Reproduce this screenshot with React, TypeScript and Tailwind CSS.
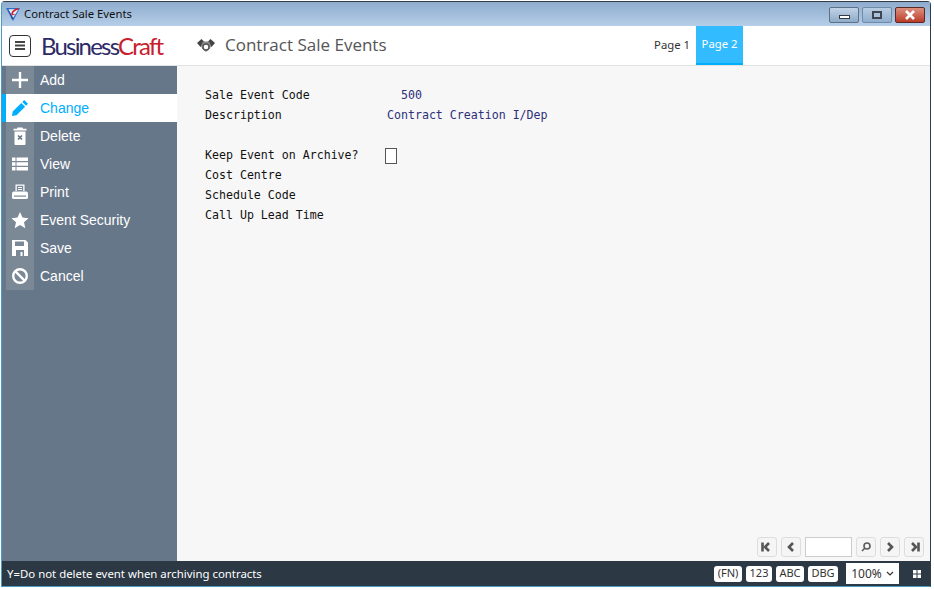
import { Fragment } from "react";

const navItems = [
  { label: "Add", icon: "add" },
  { label: "Change", icon: "change", active: true },
  { label: "Delete", icon: "delete" },
  { label: "View", icon: "view" },
  { label: "Print", icon: "print" },
  { label: "Event Security", icon: "star" },
  { label: "Save", icon: "save" },
  { label: "Cancel", icon: "cancel" },
];

function NavIcon({ name }: { name: string }) {
  const common = { width: 18, height: 18, viewBox: "0 0 18 18", fill: "currentColor" };
  switch (name) {
    case "add":
      return (
        <svg {...common}>
          <path d="M7.800 1h2.400v6.800H17v2.400h-6.800V17H7.800v-6.800H1V7.800h6.800z" />
        </svg>
      );
    case "change":
      return (
        <svg {...common}>
          <path d="M13.200 1l3.800 3.800-1.900 1.900-3.800-3.800zM10.300 3.900l3.800 3.800L5.500 16.300 1 17l.7-4.500z" />
        </svg>
      );
    case "delete":
      return (
        <svg {...common}>
          <path d="M6.500 0.500h5l.5 1.300h3.500v1.700h-13V1.800H6zM3.500 4.500h11V17a1 1 0 0 1-1 1h-9a1 1 0 0 1-1-1z" />
          <path d="M7 8.500l4 4M11 8.500l-4 4" stroke="#67778a" strokeWidth="1.700" />
        </svg>
      );
    case "view":
      return (
        <svg {...common}>
          <path d="M1 2.500h3.500v3.600H1zM5.500 2.500H17v3.600H5.500zM1 7.200h3.500v3.600H1zM5.500 7.200H17v3.600H5.500zM1 11.900h3.500v3.600H1zM5.500 11.900H17v3.600H5.500z" />
        </svg>
      );
    case "print":
      return (
        <svg {...common}>
          <path d="M4.500 1.500h9v6.500h-1.300V2.800H5.800V8H4.500z" />
          <path d="M7 4h4v1H7zM7 6h4v1H7z" />
          <path d="M3 8.500h12a2 2 0 0 1 2 2v4a1.500 1.500 0 0 1-1.500 1.500h-13A1.500 1.500 0 0 1 1 14.500v-4a2 2 0 0 1 2-2z" />
          <path d="M3 12.500h12v1.200H3z" fill="#7b8896" />
        </svg>
      );
    case "star":
      return (
        <svg {...common}>
          <path d="M9 1l2.500 5.600 6 .6-4.500 4 1.300 6L9 14.100 3.700 17.200l1.300-6-4.500-4 6-.6z" />
        </svg>
      );
    case "save":
      return (
        <svg {...common}>
          <path fillRule="evenodd" d="M1 1h13.500L17 3.500V17H1zM4 2.500V7h9V2.500zM5 11v6h8v-6z" />
          <path d="M9.500 13h2v4h-2z" />
        </svg>
      );
    default:
      return (
        <svg {...common} fill="none" stroke="currentColor" strokeWidth="2.400">
          <circle cx="9" cy="9" r="6.800" />
          <path d="M4.200 4.200l9.600 9.600" />
        </svg>
      );
  }
}

function Chevron({ dir, bar }: { dir: "left" | "right"; bar?: boolean }) {
  return (
    <svg width="12" height="12" viewBox="0 0 12 12" fill="none" stroke="#555555" strokeWidth="2.600">
      {dir === "left" ? <path d="M8 2L4 6l4 4" /> : <path d="M4 2l4 4-4 4" />}
      {bar && (dir === "left" ? <path d="M1.500 1.500v9" /> : <path d="M10.500 1.500v9" />)}
    </svg>
  );
}

function PagerButton({ children }: { children: React.ReactNode }) {
  return (
    <div className="flex h-[20px] w-[20px] items-center justify-center rounded-[3px] border border-[#dddddd] bg-[#f5f5f5]">
      {children}
    </div>
  );
}

function Badge({ label, width }: { label: string; width: string }) {
  return (
    <div className={`flex h-[16px] items-center justify-center rounded-[3px] bg-white text-[11px] text-[#333333] ${width}`}>
      {label}
    </div>
  );
}

const fields = [
  { label: "Sale Event Code", value: "500", indent: "pl-[14px]" },
  { label: "Description", value: "Contract Creation I/Dep", indent: "" },
  { spacer: true },
  { label: "Keep Event on Archive?", checkbox: true },
  { label: "Cost Centre" },
  { label: "Schedule Code" },
  { label: "Call Up Lead Time" },
];

export default function App() {
  return (
    <div className="h-[589px] w-[934px] overflow-hidden bg-white pt-[1px] pr-[3px] pb-[2px] pl-[1px] font-['Liberation_Sans',sans-serif]">
      <div className="flex h-full flex-col rounded-t-[4px] border border-[#4a9cc0] border-t-[#333b44] border-r-[#2f3d48] bg-[#b4cce6]">
        {/* Title bar */}
        <div className="flex h-[24px] shrink-0 items-center bg-gradient-to-b from-[#8eacce] to-[#b6cee8] pl-[3px] pr-[5px] font-['Noto_Sans',sans-serif]">
          <svg width="16" height="16" viewBox="0 0 16 16">
            <path d="M1 2h14L8 15z" fill="#2a6fc8" />
            <path d="M3.500 3.200h10L8 12z" fill="#e8f0fa" />
            <path d="M3 3l5 9-1 1.500z" fill="#1f3f9f" />
            <path d="M13 2C8.500 3 5.500 6 6.500 9.500L11 8.500 8 8C8 6 10 4.500 14 3.500z" fill="#d2232a" />
          </svg>
          <span className="ml-[3px] text-[11.300px] text-[#111111]">Contract Sale Events</span>
          <div className="ml-auto flex items-center gap-[3px] self-start pt-[5px]">
            <div className="flex h-[16px] w-[30px] items-end justify-center rounded-[2px] border border-[#5f6f85] bg-gradient-to-b from-[#c2d3e6] to-[#8fabc9] pb-[3px]">
              <div className="h-[4px] w-[11px] border border-[#333a44] bg-white" />
            </div>
            <div className="flex h-[16px] w-[30px] items-center justify-center rounded-[2px] border border-[#6f8ba8] bg-gradient-to-b from-[#b8cde3] to-[#90aecd]">
              <div className="h-[8px] w-[10px] border-2 border-[#3f4650] bg-[#a9c1da]" />
            </div>
            <div className="flex h-[16px] w-[30px] items-center justify-center rounded-[2px] border border-[#5a2a26] bg-gradient-to-b from-[#dc8f7e] to-[#b93a26]">
              <svg width="12" height="10" viewBox="0 0 12 10">
                <path d="M2 1l8 8M10 1L2 9" stroke="#ffffff" strokeWidth="2.600" />
              </svg>
            </div>
          </div>
        </div>

        {/* Header */}
        <div className="flex h-[40px] shrink-0 items-center border-b border-[#e2e2e2] bg-white">
          <button className="ml-[7px] flex h-[22px] w-[22px] items-center justify-center rounded-[4px] border border-[#333333]">
            <svg width="10" height="9" viewBox="0 0 10 9" fill="#444444">
              <path d="M0 0h10v2H0zM0 3.500h10v2H0zM0 7h10v2H0z" />
            </svg>
          </button>
          <div className="ml-[10px] w-[156px] font-['Lato',sans-serif] text-[24px] leading-none tracking-[-1.800px]">
            <span className="text-[#2c2a66]">Business</span>
            <span className="text-[#c8202f]">Craft</span>
          </div>
          <svg width="18" height="16" viewBox="0 0 18 16">
            <path d="M0 5l4.500-4L8 4.500 3.500 9zM18 5l-4.500-4L10 4.500 14.500 9z" fill="#444444" />
            <path d="M6 3.500h6l2 4-1 3-4 3.500-4-3.500-1-3z" fill="#8a8a8a" />
            <circle cx="9" cy="9" r="3" fill="#ffffff" stroke="#555555" strokeWidth="1.400" />
          </svg>
          <span className="mb-[2px] ml-[10px] font-['Open_Sans',sans-serif] text-[17px] text-[#555555]">Contract Sale Events</span>
          <div className="ml-auto mr-[187px] flex h-full items-stretch font-['Noto_Sans',sans-serif] text-[11.300px]">
            <div className="flex items-center px-[5px] pr-[6px] text-[#333333]">Page 1</div>
            <div className="flex w-[47px] items-center justify-center border-b-2 border-[#00aeff] bg-[#33bbff] text-white">
              Page 2
            </div>
          </div>
        </div>

        <div className="flex min-h-0 flex-1">
          {/* Sidebar */}
          <div className="w-[175px] shrink-0 bg-[#67778a]">
            {navItems.map((item) => (
              <div key={item.label} className={`flex h-[28px] items-stretch ${item.active ? "bg-white" : ""}`}>
                <div
                  className={`flex w-[32px] items-center justify-center border-l-4 ${
                    item.active ? "border-[#00aeff] text-[#00aeff]" : "border-[#67778a] bg-[#7b8896] text-white"
                  }`}
                >
                  <NavIcon name={item.icon} />
                </div>
                <div className={`ml-[6px] flex items-center text-[14px] ${item.active ? "text-[#00aeff]" : "text-white"}`}>
                  {item.label}
                </div>
              </div>
            ))}
          </div>

          {/* Form */}
          <div className="flex min-w-0 flex-1 flex-col bg-[#f7f7f7]">
            <div className="flex-1 pt-[20px] pl-[28px] font-['DejaVu_Sans_Mono',monospace] text-[11.600px]">
              {fields.map((f, i) => (
                <Fragment key={i}>
                  {f.spacer ? (
                    <div className="h-[20px]" />
                  ) : (
                    <div className="flex h-[20px] items-center">
                      <span className="w-[182px] whitespace-pre text-[#111111]">{f.label}</span>
                      {f.value && <span className={`whitespace-pre text-[#2c2f7a] ${f.indent}`}>{f.value}</span>}
                      {f.checkbox && <div className="-ml-[2px] h-[16px] w-[12px] border border-[#555555] bg-white" />}
                    </div>
                  )}
                </Fragment>
              ))}
            </div>
            <div className="flex items-center justify-end gap-[4px] pr-[6px] pb-[4px]">
              <PagerButton><Chevron dir="left" bar /></PagerButton>
              <PagerButton><Chevron dir="left" /></PagerButton>
              <div className="h-[20px] w-[47px] border border-[#cccccc] bg-white" />
              <PagerButton>
                <svg width="12" height="12" viewBox="0 0 12 12" fill="none" stroke="#5c5c5c" strokeWidth="1.600">
                  <circle cx="7" cy="5" r="3" />
                  <path d="M4.800 7.200L2 10" />
                </svg>
              </PagerButton>
              <PagerButton><Chevron dir="right" /></PagerButton>
              <PagerButton><Chevron dir="right" bar /></PagerButton>
            </div>
          </div>
        </div>

        {/* Status bar */}
        <div className="flex h-[25px] shrink-0 items-center bg-[#2c3843] pl-[5px] font-['Noto_Sans',sans-serif]">
          <span className="text-[11.400px] text-white">Y=Do not delete event when archiving contracts</span>
          <div className="ml-auto flex items-center gap-[4px]">
            <Badge label="(FN)" width="w-[28px]" />
            <Badge label="123" width="w-[26px]" />
            <Badge label="ABC" width="w-[28px]" />
            <Badge label="DBG" width="w-[30px]" />
          </div>
          <div className="ml-[8px] flex h-[21px] w-[53px] items-center justify-center gap-[4px] bg-white text-[12px] text-[#333333]">
            100%
            <svg width="8" height="6" viewBox="0 0 8 6" fill="none" stroke="#333333" strokeWidth="1.200">
              <path d="M1 1l3 3 3-3" />
            </svg>
          </div>
          <svg className="mr-[9px] ml-[14px]" width="8" height="8" viewBox="0 0 8 8" fill="#ffffff">
            <path d="M0 0h3.500v3.500H0zM4.500 0H8v3.500H4.500zM0 4.500h3.500V8H0zM4.500 4.500H8V8H4.500z" />
          </svg>
        </div>
      </div>
    </div>
  );
}
